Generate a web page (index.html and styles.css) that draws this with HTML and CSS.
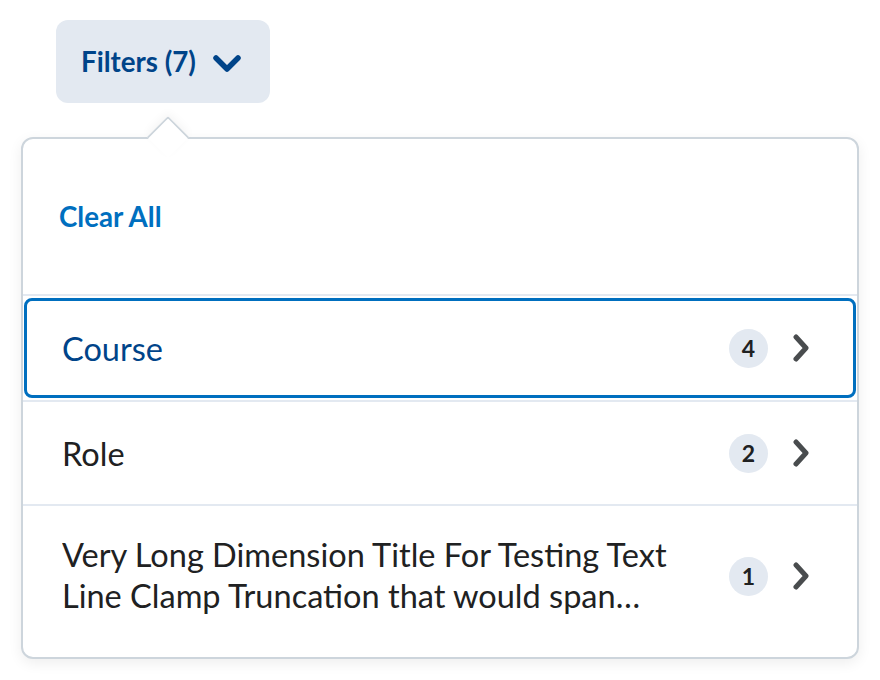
FILE: index.html
```html
<!DOCTYPE html>
<html>
<head>
<meta charset="utf-8">
<link rel="stylesheet" href="styles.css">
</head>
<body>
<div class="page">
  <button class="opener">
    <span class="opener-text">Filters (7)</span>
    <svg class="opener-chevron" width="28" height="18" viewBox="0 0 28 18"><path d="M3 3 L14 14 L25 3" fill="none" stroke="#004489" stroke-width="5.5" stroke-linecap="round" stroke-linejoin="round"/></svg>
  </button>
  <div class="dropdown">
    <div class="pointer"></div>
    <div class="header">
      <a class="clear-all">Clear All</a>
    </div>
    <div class="list">
      <div class="item item-focus">
        <span class="item-text focus-text">Course</span>
        <span class="badge">4</span>
        <svg class="chev" width="18" height="28" viewBox="0 0 18 28"><path d="M4 3 L14 14 L4 25" fill="none" stroke="#494c4e" stroke-width="5" stroke-linecap="round" stroke-linejoin="round"/></svg>
      </div>
      <div class="item">
        <span class="item-text">Role</span>
        <span class="badge">2</span>
        <svg class="chev" width="18" height="28" viewBox="0 0 18 28"><path d="M4 3 L14 14 L4 25" fill="none" stroke="#494c4e" stroke-width="5" stroke-linecap="round" stroke-linejoin="round"/></svg>
      </div>
      <div class="item item-long">
        <span class="item-text clamp">Very Long Dimension Title For Testing Text Line Clamp Truncation that would span…</span>
        <span class="badge">1</span>
        <svg class="chev" width="18" height="28" viewBox="0 0 18 28"><path d="M4 3 L14 14 L4 25" fill="none" stroke="#494c4e" stroke-width="5" stroke-linecap="round" stroke-linejoin="round"/></svg>
      </div>
    </div>
  </div>
</div>
</body>
</html>
```
FILE: styles.css
```css
* { box-sizing: border-box; }
html, body { margin: 0; padding: 0; background: #fff; }
body { font-family: Lato, "Noto Sans", sans-serif; }
.page { padding: 20px 0 0 21px; width: 880px; height: 680px; }
.opener {
  display: flex; align-items: center;
  margin-left: 35px;
  width: 214px; height: 83px;
  border: none; border-radius: 12px;
  background: #e3e9f1;
  padding: 0 0 0 25px;
  font-family: inherit; cursor: pointer;
}
.opener-text { font-weight: 700; font-size: 27.7px; color: #004489; }
.opener-chevron { margin-left: 17px; margin-top: 4px; }
.dropdown {
  position: relative;
  margin-top: 34px;
  width: 838px; height: 522px;
  border: 2px solid #cdd5dc;
  border-radius: 12px;
  background: #fff;
  box-shadow: 0 4px 14px rgba(0,0,0,0.07);
}
.pointer {
  position: absolute; left: 130px; top: -17px;
  width: 30px; height: 30px;
  background: #fff;
  border-left: 2px solid #cdd5dc; border-top: 2px solid #cdd5dc;
  transform: rotate(45deg);
  border-top-left-radius: 3px;
  box-shadow: -3px -3px 8px rgba(0,0,0,0.04);
}
.header {
  height: 157px;
  display: flex; align-items: center;
  padding-left: 36px;
  border-bottom: 2px solid #e3e9f1;
  border-radius: 10px 10px 0 0;
}
.clear-all { font-weight: 700; font-size: 27.7px; color: #006fbf; }
.list { display: flex; flex-direction: column; }
.item {
  display: flex; align-items: center;
  height: 104px;
  padding: 0 47px 0 39px;
  border-bottom: 2px solid #e3e9f1;
}
.item-focus {
  position: relative;
  height: 106px;
}
.item-focus::after {
  content: "";
  position: absolute; left: 1px; right: 1px; top: 2px; bottom: 2px;
  border: 3px solid #006fbf;
  border-radius: 8px;
}
.item-long { height: 152px; border-bottom: none; padding-bottom: 12px; }
.item-text { flex: 1; font-size: 32.5px; color: #202122; line-height: 41px; }
.focus-text { color: #004489; }
.clamp {
  display: -webkit-box; -webkit-line-clamp: 2; -webkit-box-orient: vertical;
  overflow: hidden; padding-right: 30px; margin-bottom: 2px;
}
.badge {
  width: 39px; height: 39px; border-radius: 50%;
  background: #e3e9f1; color: #202122;
  font-size: 23px; font-weight: 700;
  display: flex; align-items: center; justify-content: center;
}
.chev { margin-left: 24px; }
```
